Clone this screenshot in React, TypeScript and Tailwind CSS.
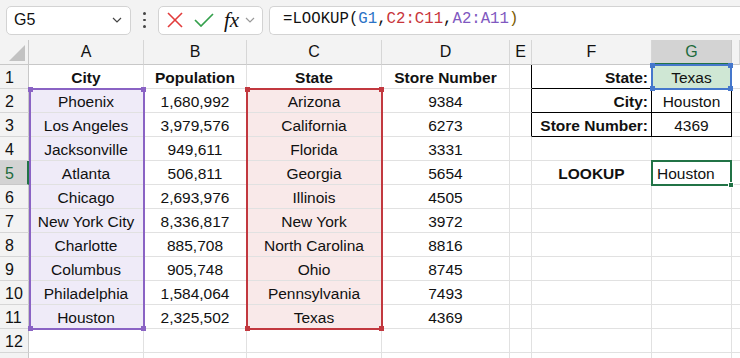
import React from 'react';

const colLetters = ['A', 'B', 'C', 'D', 'E', 'F', 'G', ''];

// row data: A, B, C, D, E, F, G
const data: string[][] = [
  ['City', 'Population', 'State', 'Store Number', '', 'State:', 'Texas'],
  ['Phoenix', '1,680,992', 'Arizona', '9384', '', 'City:', 'Houston'],
  ['Los Angeles', '3,979,576', 'California', '6273', '', 'Store Number:', '4369'],
  ['Jacksonville', '949,611', 'Florida', '3331', '', '', ''],
  ['Atlanta', '506,811', 'Georgia', '5654', '', 'LOOKUP', 'Houston'],
  ['Chicago', '2,693,976', 'Illinois', '4505', '', '', ''],
  ['New York City', '8,336,817', 'New York', '3972', '', '', ''],
  ['Charlotte', '885,708', 'North Carolina', '8816', '', '', ''],
  ['Columbus', '905,748', 'Ohio', '8745', '', '', ''],
  ['Philadelphia', '1,584,064', 'Pennsylvania', '7493', '', '', ''],
  ['Houston', '2,325,502', 'Texas', '4369', '', '', ''],
  ['', '', '', '', '', '', ''],
  ['', '', '', '', '', '', ''],
];

function Chevron({ className }: { className: string }) {
  return (
    <svg viewBox="0 0 10 6" className={className} fill="none">
      <polyline points="1,1 5,5 9,1" stroke="currentColor" strokeWidth="1.2" />
    </svg>
  );
}

function Corners({ color }: { color: string }) {
  return (
    <>
      <div className={`absolute -left-[3px] -top-[3px] w-[5px] h-[5px] ${color}`} />
      <div className={`absolute -right-[3px] -top-[3px] w-[5px] h-[5px] ${color}`} />
      <div className={`absolute -left-[3px] -bottom-[3px] w-[5px] h-[5px] ${color}`} />
      <div className={`absolute -right-[3px] -bottom-[3px] w-[5px] h-[5px] ${color}`} />
    </>
  );
}

function cellClass(r: number, c: number) {
  // r: 1-based row, c: 0-based column (A=0)
  let cls = 'flex items-center pt-[2px] border-r border-b ';
  const inTable = r >= 1 && r <= 3;
  if (inTable && (c === 5 || c === 6)) cls += 'border-b-black ';
  else cls += 'border-b-[#e1e1e1] ';
  if (inTable && (c === 4 || c === 5 || c === 6)) cls += 'border-r-black ';
  else cls += 'border-r-[#e1e1e1] ';

  if (r === 1 && c <= 3) cls += 'justify-center font-bold ';
  else if (c === 5 && r <= 3) cls += 'justify-end pr-[3px] font-bold ';
  else if (c === 5 && r === 5) cls += 'justify-center font-bold ';
  else if (c === 6 && r === 5) cls += 'justify-start pl-[5px] ';
  else cls += 'justify-center ';

  if (c === 0 && r >= 2 && r <= 11) cls += 'bg-[#efebf8] ';
  else if (c === 2 && r >= 2 && r <= 11) cls += 'bg-[#f9e9e9] ';
  else if (c === 6 && r === 1) cls += 'bg-[#cfe7d4] ';
  else cls += 'bg-white ';
  return cls;
}

export default function App() {
  return (
    <div className="w-[740px] h-[358px] overflow-hidden bg-[#f3f3f3] font-['Liberation_Sans',sans-serif] text-[#111]">
      {/* Formula bar */}
      <div className="h-[40px] flex items-center pl-[6px]">
        <div className="w-[125px] h-[29px] bg-white border border-[#d3d3d3] rounded-[5px] flex items-center justify-between pl-[7px] pr-[8px]">
          <span className="text-[16px]">G5</span>
          <Chevron className="w-[10px] h-[6px] text-[#444]" />
        </div>
        <div className="w-[27px] flex flex-col items-center gap-[4px]">
          <div className="w-[2.5px] h-[2.5px] bg-[#444] rounded-full" />
          <div className="w-[2.5px] h-[2.5px] bg-[#444] rounded-full" />
          <div className="w-[2.5px] h-[2.5px] bg-[#444] rounded-full" />
        </div>
        <div className="w-[105px] h-[29px] bg-white border border-[#d3d3d3] rounded-[5px] flex items-center pl-[8px]">
          <svg viewBox="0 0 16 16" className="w-[16px] h-[16px]">
            <line x1="1" y1="1" x2="15" y2="15" stroke="#e23b3b" strokeWidth="1.6" />
            <line x1="15" y1="1" x2="1" y2="15" stroke="#e23b3b" strokeWidth="1.6" />
          </svg>
          <svg viewBox="0 0 20 14" className="ml-[11px] w-[20px] h-[14px]">
            <polyline points="1,7 7,13 19,1" fill="none" stroke="#34a04c" strokeWidth="1.7" />
          </svg>
          <span className="ml-[10px] font-['Liberation_Serif',serif] italic text-[21px] leading-none">fx</span>
          <Chevron className="ml-[6px] w-[10px] h-[6px] text-[#999]" />
        </div>
        <div className="ml-[6px] flex-1 h-[29px] bg-white border border-r-0 border-[#d3d3d3] rounded-l-[5px] flex items-center pl-[13px] font-['Liberation_Mono',monospace] text-[15.7px]">
          <span>=LOOKUP(</span>
          <span className="text-[#2b73c6]">G1</span>
          <span>,</span>
          <span className="text-[#c8353a]">C2:C11</span>
          <span>,</span>
          <span className="text-[#8058c0]">A2:A11</span>
          <span className="text-[#7a5a00]">)</span>
        </div>
      </div>

      {/* Sheet grid */}
      <div className="relative grid grid-cols-[29px_115px_103px_135px_128px_22px_120px_80px_8px] grid-rows-[25px_repeat(13,24px)]">
        {/* Select-all corner */}
        <div className="bg-[#f3f3f3] border-r border-b border-[#c8c8c8] flex items-end justify-end pr-[3px] pb-[3px]">
          <svg viewBox="0 0 16 16" className="w-[16px] h-[16px]">
            <polygon points="16,0 16,16 0,16" fill="#c2c2c2" />
          </svg>
        </div>
        {colLetters.map((l, i) =>
          l === 'G' ? (
            <div key={i} className="bg-[#d3d3d3] border-r border-r-[#c8c8c8] border-b-2 border-b-[#217346] flex items-center justify-center text-[16px] text-[#1d6b3c]">
              {l}
            </div>
          ) : (
            <div key={i} className="bg-[#f3f3f3] border-r border-r-[#d6d6d6] border-b border-b-[#c8c8c8] flex items-center justify-center text-[16px]">
              {l}
            </div>
          )
        )}

        {data.map((row, ri) => {
          const r = ri + 1;
          return (
            <React.Fragment key={r}>
              {r === 5 ? (
                <div className="bg-[#d3d3d3] border-r-2 border-r-[#217346] border-b border-b-[#c8c8c8] flex items-center pt-[2px] pl-[5px] text-[16px] text-[#1d6b3c]">
                  {r}
                </div>
              ) : (
                <div className="bg-[#f3f3f3] border-r border-r-[#c8c8c8] border-b border-b-[#d6d6d6] flex items-center pt-[2px] pl-[5px] text-[16px]">
                  {r <= 12 ? r : ''}
                </div>
              )}
              {row.map((v, c) => (
                <div key={c} className={cellClass(r, c) + 'text-[15.5px] whitespace-nowrap'}>
                  {v}
                </div>
              ))}
              <div className="bg-white border-b border-b-[#e1e1e1]" />
            </React.Fragment>
          );
        })}

        {/* A2:A11 reference range */}
        <div className="absolute left-[29px] top-[48px] w-[116px] h-[242px] border-2 border-[#8a63c4]">
          <Corners color="bg-[#8a63c4]" />
        </div>
        {/* C2:C11 reference range */}
        <div className="absolute left-[246px] top-[48px] w-[137px] h-[242px] border-2 border-[#c2383f]">
          <Corners color="bg-[#c2383f]" />
        </div>
        {/* G1 reference */}
        <div className="absolute left-[651px] top-[24px] w-[81px] h-[26px] border-2 border-[#4577cc]">
          <Corners color="bg-[#4577cc]" />
        </div>
        {/* Active cell G5 */}
        <div className="absolute left-[651px] top-[120px] w-[81px] h-[26px] border-2 border-[#217346]">
          <div className="absolute -right-[4px] -bottom-[4px] w-[6px] h-[6px] bg-[#217346] border border-white" />
        </div>
      </div>
    </div>
  );
}
